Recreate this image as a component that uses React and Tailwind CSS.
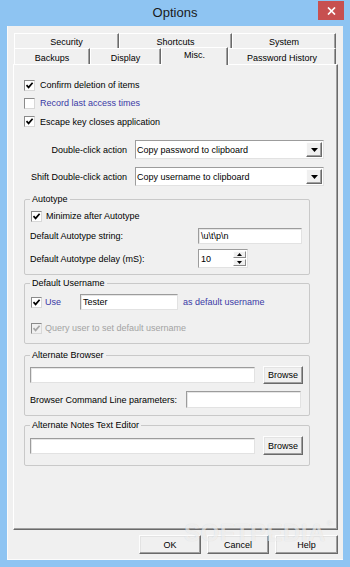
import React from "react";

function Check({ checked = true, disabled = false }) {
  return (
    <span
      className={
        "flex h-[11px] w-[11px] shrink-0 items-center justify-center border border-t-[#8a8a8a] border-l-[#8a8a8a] border-r-[#d8d8d8] border-b-[#d8d8d8] " +
        (disabled ? "bg-[#f0f0f0]" : "bg-white")
      }
    >
      {checked && (
        <svg width="9" height="9" viewBox="0 0 9 9">
          <path
            d="M1.5 4.2 L3.6 6.4 L7.6 1.8"
            fill="none"
            stroke={disabled ? "#a6a6a6" : "#000"}
            strokeWidth="1.7"
          />
        </svg>
      )}
    </span>
  );
}

function Field({ w, h, children }) {
  return (
    <div
      className="flex items-center overflow-hidden border border-t-[#9c9c9c] border-l-[#9c9c9c] border-r-[#e2e2e2] border-b-[#e2e2e2] bg-white pl-[2px] shadow-[inset_1px_1px_0_#e6e6e6]"
      style={{ width: w, height: h }}
    >
      {children}
    </div>
  );
}

function Btn({ w, h, children }) {
  return (
    <div
      className="flex items-center justify-center border border-t-[#fdfdfd] border-l-[#fdfdfd] border-r-[#6a6a6a] border-b-[#6a6a6a] bg-[#f0f0f0] shadow-[inset_-1px_-1px_0_#a0a0a0,inset_1px_1px_0_#e3e3e3]"
      style={{ width: w, height: h }}
    >
      {children}
    </div>
  );
}

function Combo({ text }) {
  return (
    <div className="flex h-[19px] w-[189px] items-center border border-t-[#9c9c9c] border-l-[#9c9c9c] border-r-[#e2e2e2] border-b-[#e2e2e2] bg-white">
      <span className="flex-1 truncate pl-[1px]">{text}</span>
      <span className="mr-[1px] flex h-[15px] w-[16px] items-center justify-center border border-t-[#fdfdfd] border-l-[#fdfdfd] border-r-[#6a6a6a] border-b-[#6a6a6a] bg-[#f0f0f0] shadow-[inset_-1px_-1px_0_#a0a0a0]">
        <svg width="7" height="4" viewBox="0 0 7 4">
          <path d="M0 0 H7 L3.5 4 Z" fill="#000" />
        </svg>
      </span>
    </div>
  );
}

function Tab({ w, children, selected = false, h }) {
  return (
    <div
      className={
        "flex shrink-0 items-center justify-center border-t border-l border-t-white border-l-white border-r border-r-[#6a6a6a] bg-[#f0f0f0] shadow-[inset_-1px_0_0_#a0a0a0] " +
        (selected ? "relative z-10 -mb-px pb-[3px]" : "pt-[2px]")
      }
      style={{ width: w, height: h }}
    >
      {children}
    </div>
  );
}

function Group({ title, children, className = "" }) {
  return (
    <fieldset
      className={
        "w-[286px] rounded-[2px] border border-[#c9c9c9] px-[5px] " + className
      }
    >
      <legend className="px-[2px] leading-[12px]">{title}</legend>
      {children}
    </fieldset>
  );
}

export default function App() {
  return (
    <div className="relative flex h-[567px] w-[350px] flex-col overflow-hidden bg-[#8ec4f2] font-['Liberation_Sans',Arial,sans-serif] text-[9px] leading-[12px] text-black">
      {/* title bar */}
      <div className="grid h-[26px] shrink-0 grid-cols-[1fr_auto_1fr] items-start px-[6px]">
        <div />
        <div className="pt-[5px] text-[13px] leading-[16px] text-[#1a1a1a]">
          Options
        </div>
        <div className="flex justify-end pt-[1px]">
          <div className="flex h-[19px] w-[26px] items-center justify-center bg-[#c75050]">
            <svg width="9" height="8" viewBox="0 0 9 8">
              <path
                d="M1 0.5 L8 7.5 M8 0.5 L1 7.5"
                stroke="#fff"
                strokeWidth="1.7"
              />
            </svg>
          </div>
        </div>
      </div>

      {/* client area */}
      <div className="mx-[7px] flex h-[534px] flex-col bg-[#f0f0f0] shadow-[inset_1px_-1px_0_#fbfbfb]">
        <div className="ml-[6px] mt-[7px] flex w-[325px] flex-col">
          {/* back tab row */}
          <div className="flex h-[15px] pl-[1px]">
            <Tab w={105} h={15}>Security</Tab>
            <Tab w={113} h={15}>Shortcuts</Tab>
            <Tab w={104} h={15}>System</Tab>
          </div>
          {/* front tab row */}
          <div className="flex h-[16px] items-end pl-[1px]">
            <Tab w={76} h={16}>Backups</Tab>
            <Tab w={71} h={16}>Display</Tab>
            <Tab w={67} h={18} selected>
              Misc.
            </Tab>
            <Tab w={108} h={16}>Password History</Tab>
          </div>

          {/* panel */}
          <div className="flex h-[466px] w-[325px] flex-col border border-t-white border-l-white border-r-[#6a6a6a] border-b-[#6a6a6a] pl-[10px] shadow-[inset_-1px_-1px_0_#a0a0a0]">
            <div className="mt-[11px] flex h-[18px] items-center">
              <Check />
              <span className="ml-[5px]">Confirm deletion of items</span>
            </div>
            <div className="flex h-[18px] items-center">
              <Check checked={false} />
              <span className="ml-[5px] text-[#3a3aa6]">
                Record last access times
              </span>
            </div>
            <div className="flex h-[19px] items-center">
              <Check />
              <span className="ml-[5px]">Escape key closes application</span>
            </div>

            <div className="mt-[9px] flex h-[19px] items-center">
              <span className="w-[103px] text-right">Double-click action</span>
              <div className="ml-[8px]">
                <Combo text="Copy password to clipboard" />
              </div>
            </div>
            <div className="mt-[8px] flex h-[19px] items-center">
              <span className="w-[103px] text-right">
                Shift Double-click action
              </span>
              <div className="ml-[8px]">
                <Combo text="Copy username to clipboard" />
              </div>
            </div>

            <Group title="Autotype" className="mt-[7px] pb-[6px]">
              <div className="mt-[4px] flex h-[14px] items-center pl-[1px]">
                <Check />
                <span className="ml-[4px]">Minimize after Autotype</span>
              </div>
              <div className="mt-[5px] flex h-[16px] items-center">
                <span className="w-[168px]">Default Autotype string:</span>
                <Field w={104} h={16}>
                  {"\\u\\t\\p\\n"}
                </Field>
              </div>
              <div className="mt-[5px] flex h-[19px] items-center">
                <span className="w-[168px]">Default Autotype delay (mS):</span>
                <div className="flex h-[19px] w-[50px] items-center border border-t-[#9c9c9c] border-l-[#9c9c9c] border-r-[#e2e2e2] border-b-[#e2e2e2] bg-white">
                  <span className="flex-1 pl-[2px]">10</span>
                  <div className="mr-[1px] flex h-[15px] w-[13px] flex-col">
                    <span className="flex h-[7px] items-center justify-center border border-t-[#fdfdfd] border-l-[#fdfdfd] border-r-[#8a8a8a] border-b-[#8a8a8a] bg-[#f0f0f0]">
                      <svg width="5" height="3" viewBox="0 0 5 3">
                        <path d="M0 3 H5 L2.5 0 Z" fill="#000" />
                      </svg>
                    </span>
                    <span className="mt-px flex h-[7px] items-center justify-center border border-t-[#fdfdfd] border-l-[#fdfdfd] border-r-[#8a8a8a] border-b-[#8a8a8a] bg-[#f0f0f0]">
                      <svg width="5" height="3" viewBox="0 0 5 3">
                        <path d="M0 0 H5 L2.5 3 Z" fill="#000" />
                      </svg>
                    </span>
                  </div>
                </div>
              </div>
            </Group>

            <Group title="Default Username" className="mt-[2px] pb-[8px]">
              <div className="mt-[5px] flex h-[16px] items-center pl-[1px]">
                <Check />
                <span className="ml-[3px] w-[35px] text-[#3a3aa6]">Use</span>
                <Field w={98} h={16}>
                  Tester
                </Field>
                <span className="ml-[5px] text-[#3a3aa6]">
                  as default username
                </span>
              </div>
              <div className="mt-[11px] flex h-[14px] items-center pl-[1px]">
                <Check disabled />
                <span className="ml-[3px] text-[#a3a3a3]">
                  Query user to set default username
                </span>
              </div>
            </Group>

            <Group title="Alternate Browser" className="mt-[5px] pb-[7px]">
              <div className="mt-[5px] flex h-[18px] items-center">
                <Field w={225} h={16} />
                <div className="ml-[8px]">
                  <Btn w={40} h={18}>
                    Browse
                  </Btn>
                </div>
              </div>
              <div className="mt-[7px] flex h-[17px] items-center">
                <span className="w-[156px]">
                  Browser Command Line parameters:
                </span>
                <Field w={115} h={17} />
              </div>
            </Group>

            <Group
              title="Alternate Notes Text Editor"
              className="mt-[3px] pb-[10px]"
            >
              <div className="mt-[5px] flex h-[19px] items-center">
                <Field w={225} h={16} />
                <div className="ml-[8px]">
                  <Btn w={40} h={19}>
                    Browse
                  </Btn>
                </div>
              </div>
            </Group>
          </div>
        </div>

        {/* bottom buttons */}
        <div className="mt-[5px] flex h-[19px] justify-end gap-[6px] pr-[5px]">
          <Btn w={62} h={19}>
            OK
          </Btn>
          <Btn w={62} h={19}>
            Cancel
          </Btn>
          <Btn w={63} h={19}>
            Help
          </Btn>
        </div>
      </div>

      {/* watermark */}
      <div className="pointer-events-none absolute left-[184px] top-[519px] flex items-start text-[24px] font-bold leading-[28px] tracking-[0.5px] text-white/60 [text-shadow:0_0_1px_rgba(0,0,0,0.12)]">
        SOFTPEDIA
        <span className="ml-px text-[8px] leading-[10px]">®</span>
      </div>
    </div>
  );
}
